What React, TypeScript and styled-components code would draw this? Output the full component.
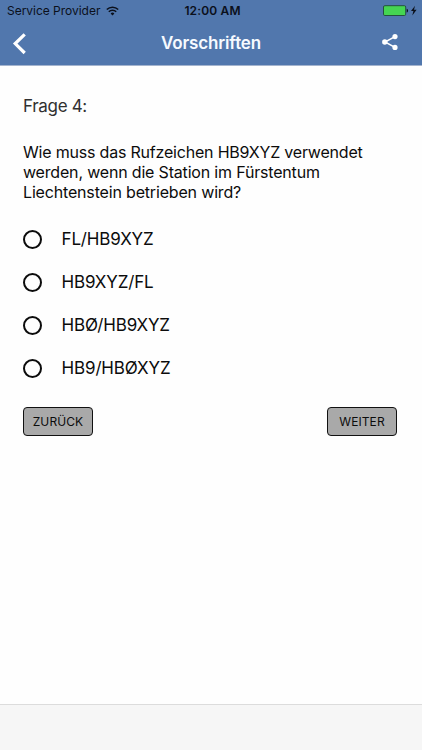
import React from "react";
import styled, { createGlobalStyle } from "styled-components";

const GlobalStyle = createGlobalStyle`
  * { box-sizing: border-box; }
  body { margin: 0; background: #fefefe; font-family: Inter, "Liberation Sans", sans-serif; }
`;

const Screen = styled.div`
  width: 100%;
  height: 100vh;
  display: flex;
  flex-direction: column;
  overflow: hidden;
  background: #fefefe;
`;

const Header = styled.header`
  flex: none;
  height: 66px;
  background: #5177ad;
  border-bottom: 1px solid #a4b4ce;
`;

const StatusBar = styled.div`
  height: 22px;
  padding: 0 5px 0 7px;
  display: grid;
  grid-template-columns: 1fr auto 1fr;
  align-items: center;
  color: #0b101b;
  font-size: 12px;
  line-height: 22px;
`;

const Carrier = styled.div`
  display: flex;
  align-items: center;
  gap: 6px;
  letter-spacing: -0.02px;
`;

const Clock = styled.div`
  margin-left: 1px;
  font-weight: 600;
  letter-spacing: 0.15px;
`;

const Power = styled.div`
  display: flex;
  justify-content: flex-end;
  align-items: center;
`;

const NavBar = styled.div`
  height: 43px;
  padding: 0 23px 0 12px;
  display: grid;
  grid-template-columns: 1fr auto 1fr;
  align-items: center;
`;

const NavButton = styled.button<{ $end?: boolean }>`
  display: flex;
  justify-self: ${(p) => (p.$end ? "end" : "start")};
  margin-top: ${(p) => (p.$end ? "-3px" : "0")};
  padding: 0;
  border: 0;
  background: none;
`;

const Title = styled.h1`
  margin: -1px 0 0 11px;
  color: #f6faff;
  font-size: 17px;
  font-weight: 600;
  line-height: 24px;
  letter-spacing: -0.14px;
`;

const Content = styled.main`
  flex: 1;
  padding: 29px 25px 0 23px;
`;

const Heading = styled.h2`
  margin: 0;
  color: #303030;
  font-size: 17px;
  font-weight: 400;
  line-height: 22px;
  letter-spacing: -0.32px;
`;

const Question = styled.p`
  margin: 25px 0 0;
  color: #0c0c0c;
  font-size: 16px;
  line-height: 20.1px;
  white-space: nowrap;
`;

const Line = styled.span<{ $tracking: number }>`
  display: block;
  letter-spacing: ${(p) => p.$tracking}px;
`;

const Options = styled.div`
  margin-top: 15.6px;
`;

const Option = styled.label`
  display: flex;
  align-items: center;
  height: 42.8px;
  gap: 19.5px;
  color: #0c0c0c;
  font-size: 17px;
  letter-spacing: -0.14px;
`;

const Radio = styled.input`
  appearance: none;
  flex: none;
  width: 19px;
  height: 19px;
  margin: 1px 0 0;
  border: 2px solid #0c0c0c;
  border-radius: 50%;
`;

const Actions = styled.div`
  margin-top: 18.2px;
  display: flex;
  justify-content: space-between;
`;

const Action = styled.button`
  width: 70px;
  height: 29px;
  padding: 0;
  border: 1px solid #111;
  border-radius: 4px;
  background: #a9a9a9;
  color: #0c0c0c;
  font: 400 12px Inter, sans-serif;
  letter-spacing: 0.1px;
`;

const Footer = styled.footer`
  flex: none;
  height: 46px;
  border-top: 1px solid #dcdcdc;
  background: #f6f6f6;
`;

const LINES = [
  { text: "Wie muss das Rufzeichen HB9XYZ verwendet", tracking: -0.2 },
  { text: "werden, wenn die Station im Fürstentum", tracking: -0.18 },
  { text: "Liechtenstein betrieben wird?", tracking: -0.17 },
];

const ANSWERS = ["FL/HB9XYZ", "HB9XYZ/FL", "HBØ/HB9XYZ", "HB9/HBØXYZ"];

const WifiIcon = () => (
  <svg width="13" height="10" viewBox="0 0 13 10" fill="none" stroke="#0b101b" strokeWidth="1.6">
    <path d="M.8 3.5a8.2 8.2 0 0 1 11.4 0M2.8 5.7a5.3 5.3 0 0 1 7.4 0" />
    <path d="M6.5 9.4 4.6 7.5a2.8 2.8 0 0 1 3.8 0z" fill="#0b101b" stroke="none" />
  </svg>
);

const BatteryIcon = () => (
  <svg width="34" height="12" viewBox="0 0 34 12">
    <rect x=".5" y=".7" width="22.2" height="9.8" rx="1.3" fill="#45d552" stroke="#24503f" />
    <path d="M23.7 3.7c1.8.2 1.8 3.6 0 3.8z" fill="#0b101b" />
    <path d="M32 .8 28 6.1h2.4l-1.1 4.5 4.3-5.9H31z" fill="#0b101b" />
  </svg>
);

const BackIcon = () => (
  <svg width="16" height="22" viewBox="0 0 16 22" fill="none" stroke="#fff" strokeWidth="3.2">
    <path d="M12.7 1.3 3.2 10.6l9.5 9.4" />
  </svg>
);

const ShareIcon = () => (
  <svg width="18" height="18" viewBox="0 0 18 18" fill="#fff">
    <path d="M14 3.6 4 9l10 5.4" fill="none" stroke="#fff" strokeWidth="1.5" />
    <circle cx="14" cy="3.6" r="2.6" />
    <circle cx="3.8" cy="9" r="2.7" />
    <circle cx="14" cy="14.4" r="2.6" />
  </svg>
);

export default function App() {
  return (
    <>
      <GlobalStyle />
      <Screen>
        <Header>
          <StatusBar>
            <Carrier>Service Provider <WifiIcon /></Carrier>
            <Clock>12:00 AM</Clock>
            <Power><BatteryIcon /></Power>
          </StatusBar>
          <NavBar>
            <NavButton aria-label="Zurück"><BackIcon /></NavButton>
            <Title>Vorschriften</Title>
            <NavButton $end aria-label="Teilen"><ShareIcon /></NavButton>
          </NavBar>
        </Header>
        <Content>
          <Heading>Frage 4:</Heading>
          <Question>
            {LINES.map((l) => (
              <Line key={l.text} $tracking={l.tracking}>{l.text}</Line>
            ))}
          </Question>
          <Options>
            {ANSWERS.map((a) => (
              <Option key={a}><Radio type="radio" name="answer" />{a}</Option>
            ))}
          </Options>
          <Actions>
            <Action>ZURÜCK</Action>
            <Action>WEITER</Action>
          </Actions>
        </Content>
        <Footer />
      </Screen>
    </>
  );
}
